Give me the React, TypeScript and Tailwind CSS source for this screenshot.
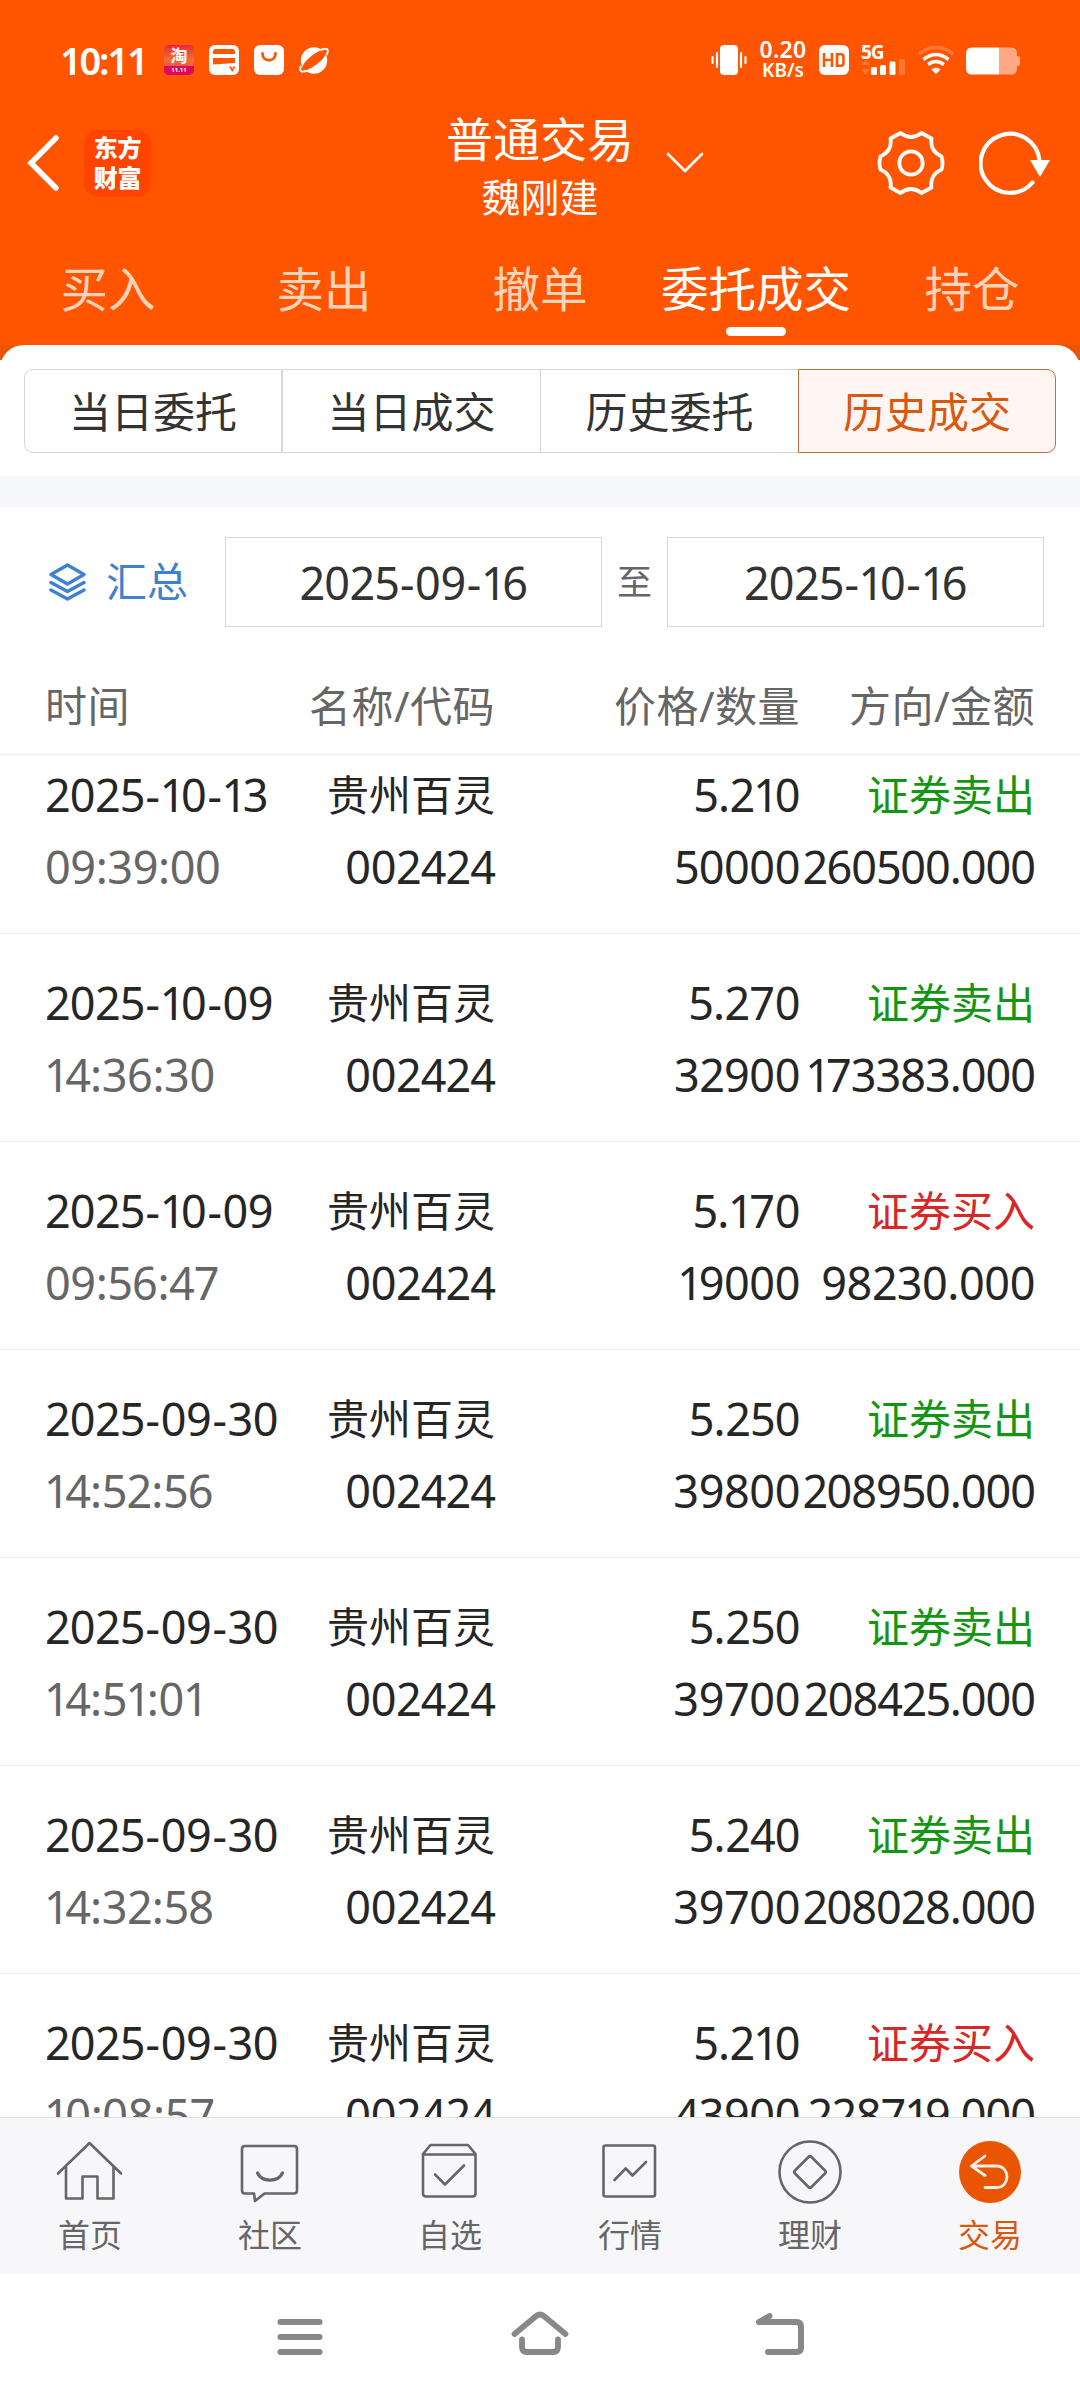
import { useState } from 'react';
import type { ReactNode } from 'react';
import clsx from 'clsx';

type Side = 'buy' | 'sell';

interface Deal {
  date: string;
  time: string;
  price: string;
  qty: string;
  side: Side;
  amount: string;
}

const DEALS: Deal[] = [
  { date: '2025-10-13', time: '09:39:00', price: '5.210', qty: '50000', side: 'sell', amount: '260500.000' },
  { date: '2025-10-09', time: '14:36:30', price: '5.270', qty: '32900', side: 'sell', amount: '173383.000' },
  { date: '2025-10-09', time: '09:56:47', price: '5.170', qty: '19000', side: 'buy', amount: '98230.000' },
  { date: '2025-09-30', time: '14:52:56', price: '5.250', qty: '39800', side: 'sell', amount: '208950.000' },
  { date: '2025-09-30', time: '14:51:01', price: '5.250', qty: '39700', side: 'sell', amount: '208425.000' },
  { date: '2025-09-30', time: '14:32:58', price: '5.240', qty: '39700', side: 'sell', amount: '208028.000' },
  { date: '2025-09-30', time: '10:08:57', price: '5.210', qty: '43900', side: 'buy', amount: '228719.000' },
];

const TOP_TABS = ['买入', '卖出', '撤单', '委托成交', '持仓'];
const SUB_TABS = ['当日委托', '当日成交', '历史委托', '历史成交'];

// Side bearings of the characters that are not as wide as a zero
const KERNING: Record<string, string> = {
  '1': '-ml-[1px] -mr-[4px]',
  '2': '-mr-[0.6px]',
  '4': '-mr-[0.6px]',
  '5': '-mr-[0.6px]',
  '-': 'mx-[1px]',
};

function Num({ children }: { children: string }) {
  return (
    <span className={clsx('whitespace-nowrap', children.length > 9 && children.includes('.') ? 'tracking-[-1px]' : 'tracking-[-0.4px]')}>
      {children.split(/([1245-])/).map((part, i) =>
        KERNING[part] ? <span key={i} className={KERNING[part]}>{part}</span> : part,
      )}
    </span>
  );
}

// ─── Status bar ───────────────────────────────────────────────────────────────

function StatusBar() {
  return (
    <div className="h-[120px] flex items-center justify-between px-[60px]">
      <div className="flex items-center">
        <span className="w-[104px] text-[38px] leading-[56px] font-semibold tracking-[-2.2px]">10:11</span>
        <div className="w-[30px] h-[30px] rounded-[5px] bg-linear-to-b from-[#e8203c] via-[#f07030] to-[#e5106a] flex flex-col items-center justify-between">
          <span className="text-[17px] leading-[21px] font-bold">淘</span>
          <span className="w-full rounded-b-[5px] bg-[#e0085c] text-center text-[6px] leading-[9px] font-bold">11.11</span>
        </div>
        <svg className="ml-[15px]" width="30" height="30" viewBox="0 0 30 30">
          <rect width="30" height="30" rx="6" fill="#fff" />
          <path d="M4 9V7Q4 4 7 4H23Q26 4 26 7V9ZM4 13H26V18L4 19.5Z" fill="#ff5500" />
          <path d="M21 21.5L23.3 25.5L25.6 21.5" stroke="#ff5500" strokeWidth="1.6" fill="none" />
        </svg>
        <svg className="ml-[15px]" width="30" height="30" viewBox="0 0 30 30">
          <rect width="30" height="30" rx="6" fill="#fff" />
          <path d="M8.5 8.5C8.5 17.5 21.5 17.5 21.5 8.5" stroke="#ff5500" strokeWidth="2.8" strokeLinecap="round" fill="none" />
        </svg>
        <svg className="ml-[15px]" width="30" height="30" viewBox="0 0 30 30">
          <circle cx="15" cy="15.5" r="13.2" fill="#fff" />
          <path d="M3 25C2 19.5 11 11 17.5 7.500C22.500 4.800 27 4.500 27.500 6C28 11 20 18.500 13 22.500C8 25.300 3.500 27 3 25Z" fill="#ff5500" />
          <path d="M2 21C0 25.500 1.500 28 8 25.800M22 4.800C28 2.500 30.500 4 27.500 10" stroke="#fff" strokeWidth="2" fill="none" />
        </svg>
      </div>
      <div className="flex items-center">
        <svg width="36" height="30" viewBox="0 0 36 30">
          <rect x="9" width="18" height="30" rx="4" fill="#fff" />
          <path d="M6 8V22M1.500 12V18M30 8V22M34.500 12V18" stroke="#fff" strokeWidth="2.2" strokeLinecap="round" />
        </svg>
        <div className="w-[50px] ml-[11px] flex flex-col items-center font-semibold">
          <span className="text-[23px] leading-[19px] tracking-[0.3px]">0.20</span>
          <span className="mt-[2px] text-[19px] leading-[19px]">KB/s</span>
        </div>
        <svg className="ml-[11px]" width="30" height="30" viewBox="0 0 30 30">
          <rect width="30" height="30" rx="6" fill="#fff" />
          <path d="M5 8V22M13 8V22M5 15H13M18 9.300H22Q24.500 9.300 24.500 12V18Q24.500 20.700 22 20.700H18Z" stroke="#ff5500" strokeWidth="2.6" fill="none" />
        </svg>
        <div className="relative ml-[12px] w-[44px] h-[30px]">
          <span className="absolute left-0 top-[-3px] text-[19px] leading-[20px] font-bold tracking-[-1px]">5G</span>
          <svg width="44" height="30" viewBox="0 0 44 30">
            <path d="M0 20L4.500 15L9 20ZM0 24H9L4.500 30Z" fill="#fff" opacity=".2" />
            <rect x="10" y="22" width="6" height="8" rx="1.500" fill="#fff" />
            <rect x="19" y="20" width="6" height="10" rx="1.500" fill="#fff" />
            <rect x="28.500" y="16.500" width="6" height="13.500" rx="1.500" fill="#fff" />
            <rect x="38" y="14" width="6" height="16" rx="1.500" fill="#fff" opacity=".2" />
          </svg>
        </div>
        <svg className="ml-[13px]" width="36" height="30" viewBox="0 0 36 30" fill="none" stroke="#fff" strokeWidth="3.600">
          <path d="M1 9Q18 -4.500 35 9" opacity=".22" />
          <path d="M5.500 14.500Q18 4.500 30.500 14.500" />
          <path d="M10 19.500Q18 13.500 26 19.500" />
          <path d="M14 24.500Q18 21.500 22 24.500L18 28.500Z" fill="#fff" strokeWidth="1" />
        </svg>
        <svg className="ml-[12px] mt-[2px]" width="54" height="28" viewBox="0 0 54 28">
          <path d="M33 0.500H45Q51 .5 51 6.500V9H52Q54 9 54 11V17Q54 19 52 19H51V21.500Q51 27.500 45 27.500H33Z" fill="#ffa883" />
          <path d="M33 .5H6Q0 .5 0 6.500V21.500Q0 27.500 6 27.500H33Z" fill="#fff" />
        </svg>
      </div>
    </div>
  );
}

// ─── Header ───────────────────────────────────────────────────────────────────

function Header() {
  return (
    <div className="h-[110px] -mt-[12px] grid grid-cols-[445px_190px_445px] items-start">
      <div className="h-[110px] flex items-center pl-[27px]">
        <svg width="32" height="56" viewBox="0 0 32 56">
          <path d="M29 3L4 28L29 53" stroke="#fff" strokeWidth="5.500" strokeLinecap="round" fill="none" />
        </svg>
        <div className="ml-[25px] w-[67px] h-[67px] rounded-[14px] bg-[#ff4400] flex flex-col items-center justify-center text-[24px] leading-[30px] font-black tracking-[-0.3px]">
          <span>东方</span>
          <span>财富</span>
        </div>
      </div>
      <div className="flex flex-col items-center whitespace-nowrap">
        <h1 className="text-[47px] leading-[62px]">普通交易</h1>
        <span className="text-[39px] leading-[54px]">魏刚建</span>
      </div>
      <div className="h-[110px] flex items-center justify-between pl-[31px] pr-[30px]">
        <svg width="38" height="22" viewBox="0 0 38 22">
          <path d="M2 2L19 19L36 2" stroke="#fff" strokeWidth="2.600" strokeLinecap="round" strokeLinejoin="round" fill="none" />
        </svg>
        <div className="flex items-center gap-[34px]">
          <svg width="68" height="66" viewBox="0 0 68 66" fill="none" stroke="#fff" strokeWidth="3.800" strokeLinejoin="round">
            <circle cx="34" cy="33" r="11.700" />
            <path d="M23.500 3Q34 11 44.500 3L54.500 8.500Q52.500 21 64.500 26.500Q66.500 33 64.500 39.500Q52.500 45 54.500 57.500L44.500 63Q34 55 23.500 63L13.500 57.500Q15.500 45 3.500 39.500Q1.500 33 3.500 26.500Q15.500 21 13.500 8.500Z" />
          </svg>
          <svg width="71" height="66" viewBox="0 0 71 66">
            <path d="M60.500 31A29.500 29.500 0 1 0 53.500 52.500" fill="none" stroke="#fff" strokeWidth="4.200" strokeLinecap="round" />
            <path d="M51 30H71L61 47Z" fill="#fff" />
          </svg>
        </div>
      </div>
    </div>
  );
}

function TopTabs({ active, onSelect }: { active: string; onSelect: (tab: string) => void }) {
  return (
    <nav className="h-[127px] grid grid-cols-5">
      {TOP_TABS.map((tab) => (
        <button
          key={tab}
          onClick={() => onSelect(tab)}
          className={clsx(
            'flex flex-col items-center pt-[41px] text-[47.5px] leading-[60px] whitespace-nowrap',
            tab === active ? 'text-white' : 'text-[#ffd3b8]',
          )}
        >
          {tab}
          {tab === active && <span className="mt-[8px] w-[60px] h-[9px] rounded-full bg-white" />}
        </button>
      ))}
    </nav>
  );
}

// ─── Filters ──────────────────────────────────────────────────────────────────

function SubTabs({ active, onSelect }: { active: string; onSelect: (tab: string) => void }) {
  return (
    <div className="bg-[linear-gradient(#e85508_15px,#fff_15px)]">
      <div className="h-[131px] rounded-t-[24px] bg-white px-[24px] pt-[24px]">
        <div className="h-[84px] grid grid-cols-4 text-[42px]">
          {SUB_TABS.map((tab, i) => (
            <button
              key={tab}
              onClick={() => onSelect(tab)}
              className={clsx(
                'flex items-center justify-center border pt-[2px] leading-[60px]',
                i === 0 && 'rounded-l-[9px]',
                i === 3 && 'rounded-r-[9px]',
                (i === 1 || i === 2) && 'border-r-0',
                tab === active
                  ? 'border-[#c07045] bg-[#fff6f3] text-[#d9580f]'
                  : 'border-[#d4d7d7] text-[#333333]',
              )}
            >
              {tab}
            </button>
          ))}
        </div>
      </div>
    </div>
  );
}

function DateBox({ value }: { value: string }) {
  return (
    <div className="w-[377px] h-[90px] pt-[2px] border border-[#d6d6d6] flex items-center justify-center text-[45px] text-[#333333]">
      <Num>{value}</Num>
    </div>
  );
}

function DateFilter() {
  return (
    <div className="h-[150px] pl-[49px] pr-[36px] flex items-center">
      <svg width="37" height="38" viewBox="0 0 37 38" fill="none" stroke="#3f80d0" strokeWidth="3.400" strokeLinecap="round" strokeLinejoin="round">
        <path d="M18.500 2L35 11.500L18.500 21L2 11.500Z" />
        <path d="M2 19.500L18.500 28.500L35 19.500" />
        <path d="M2 27L18.500 36L35 27" />
      </svg>
      <span className="ml-[20px] w-[119px] text-[41px] text-[#3f80d0]">汇总</span>
      <DateBox value="2025-09-16" />
      <span className="flex-1 text-center text-[35px] text-[#666666]">至</span>
      <DateBox value="2025-10-16" />
    </div>
  );
}

// ─── Deal list ────────────────────────────────────────────────────────────────

function DealRow({ deal }: { deal: Deal }) {
  return (
    <div className="h-[208px] shrink-0 pt-[32px] px-[45px] border-b border-[#eeeff0] grid grid-cols-[250px_200px_305px_235px] grid-rows-[72px_72px] text-right text-[45px] leading-[73px] text-[#262626]">
      <span className="text-left"><Num>{deal.date}</Num></span>
      <span className="text-[42px]">贵州百灵</span>
      <Num>{deal.price}</Num>
      <span className={clsx('text-[42px]', deal.side === 'sell' ? 'text-[#139613]' : 'text-[#d92626]')}>
        {deal.side === 'sell' ? '证券卖出' : '证券买入'}
      </span>
      <span className="text-left text-[#666666]"><Num>{deal.time}</Num></span>
      <Num>002424</Num>
      <Num>{deal.qty}</Num>
      <Num>{deal.amount}</Num>
    </div>
  );
}

function DealList() {
  return (
    <>
      <div className="h-[99px] shrink-0 px-[45px] border-b-[3px] border-[#f5f7f7] grid grid-cols-[250px_200px_305px_235px] text-right text-[42px] leading-[98px] tracking-[0.5px] text-[#666666] whitespace-nowrap">
        <span className="text-left">时间</span>
        <span>名称/代码</span>
        <span>价格/数量</span>
        <span>方向/金额</span>
      </div>
      <div className="flex-1 min-h-0 overflow-hidden">
        <div className="-mt-[30px] flex flex-col">
          {DEALS.map((deal) => <DealRow key={deal.date + deal.time} deal={deal} />)}
        </div>
      </div>
    </>
  );
}

// ─── Bottom bar ───────────────────────────────────────────────────────────────

const BOTTOM_ITEMS: { label: string; icon: ReactNode }[] = [
  {
    label: '首页',
    icon: (
      <>
        <path d="M0 33.500L31.500 3L63 33.500" />
        <path d="M8 27V58.500H24.500V36.500H39.500V58.500H55.500V27" />
      </>
    ),
  },
  {
    label: '社区',
    icon: (
      <>
        <path d="M7 6H56Q59 6 59 9V50.500Q59 53.500 56 53.500H26.500L17 61L16 53.500H7Q4 53.500 4 50.500V9Q4 6 7 6Z" />
        <path d="M19.500 33C24 42.500 40 42.500 44.500 33" strokeWidth="3.200" />
      </>
    ),
  },
  {
    label: '自选',
    icon: (
      <>
        <path d="M5 14L12.500 5H50L57.500 14V53.500Q57.500 56.500 54.500 56.500H8Q5 56.500 5 53.500ZM5 14.500H57.500" />
        <path d="M17 34.500L27 44.500L46 25.500" />
      </>
    ),
  },
  {
    label: '行情',
    icon: (
      <>
        <rect x="5.500" y="5.500" width="51.500" height="51" rx="2" />
        <path d="M16.500 40L27.700 28.500L34.500 35.500L48 22" />
      </>
    ),
  },
  {
    label: '理财',
    icon: (
      <>
        <circle cx="32" cy="32" r="30.500" />
        <path d="M30.500 17Q32 15.500 33.500 17L47 30.500Q48.500 32 47 33.500L33.500 47Q32 48.500 30.500 47L17 33.500Q15.500 32 17 30.500Z" />
      </>
    ),
  },
  {
    label: '交易',
    icon: (
      <>
        <circle cx="32" cy="32" r="31" fill="#ea5504" stroke="none" />
        <path d="M27 16L13.500 26L27 35.500M13.500 26H38.500C52.500 26 52.500 47.500 38.500 47.500H27" stroke="#fff0e4" strokeWidth="2.800" />
      </>
    ),
  },
];

function BottomBar() {
  return (
    <nav className="h-[157px] shrink-0 border-t border-[#e0e1e3] bg-[#f7f7fa] grid grid-cols-6">
      {BOTTOM_ITEMS.map(({ label, icon }) => (
        <div
          key={label}
          className={clsx('flex flex-col items-center pt-[22px] text-[32px]', label === '交易' ? 'text-[#d9580f]' : 'text-[#666666]')}
        >
          <svg width="64" height="64" viewBox="0 0 64 64" fill="none" stroke="#666" strokeWidth="2.600" strokeLinecap="round" strokeLinejoin="round" className="overflow-visible">
            {icon}
          </svg>
          <span className="mt-[7px] leading-[48px]">{label}</span>
        </div>
      ))}
    </nav>
  );
}

function SystemNav() {
  return (
    <div className="h-[126px] shrink-0 px-[180px] grid grid-cols-3 place-items-center">
      <svg width="60" height="60" viewBox="0 0 60 60" stroke="#888" strokeWidth="6" strokeLinecap="round">
        <path d="M10.500 15H49.500M10.500 30H49.500M10.500 45H49.500" />
      </svg>
      <svg width="60" height="60" viewBox="0 0 60 60" fill="none" stroke="#888" strokeWidth="5.800" strokeLinecap="round" strokeLinejoin="round">
        <path d="M4.500 27L26.500 8.800Q30 6 33.500 8.800L55.500 27" />
        <path d="M12 32.500V40Q12 45 17 45H43Q48 45 48 40V32.500" />
      </svg>
      <svg width="60" height="60" viewBox="0 0 60 60" fill="none" stroke="#888" strokeWidth="6" strokeLinecap="round" strokeLinejoin="round">
        <path d="M19.500 9L9 15H46.500Q51 15 51 19.500V40.500Q51 45 46.500 45H18" />
      </svg>
    </div>
  );
}

function App() {
  const [topTab, setTopTab] = useState('委托成交');
  const [subTab, setSubTab] = useState('历史成交');

  return (
    <div className="w-[1080px] h-[2400px] flex flex-col overflow-hidden bg-white font-['Noto_Sans','Noto_Sans_CJK_SC',sans-serif]">
      <header className="h-[345px] shrink-0 bg-[#ff5500] text-white">
        <StatusBar />
        <Header />
        <TopTabs active={topTab} onSelect={setTopTab} />
      </header>
      <SubTabs active={subTab} onSelect={setSubTab} />
      <div className="h-[31px] shrink-0 bg-[#f6f7fa]" />
      <DateFilter />
      <DealList />
      <BottomBar />
      <SystemNav />
    </div>
  );
}

export default App;
